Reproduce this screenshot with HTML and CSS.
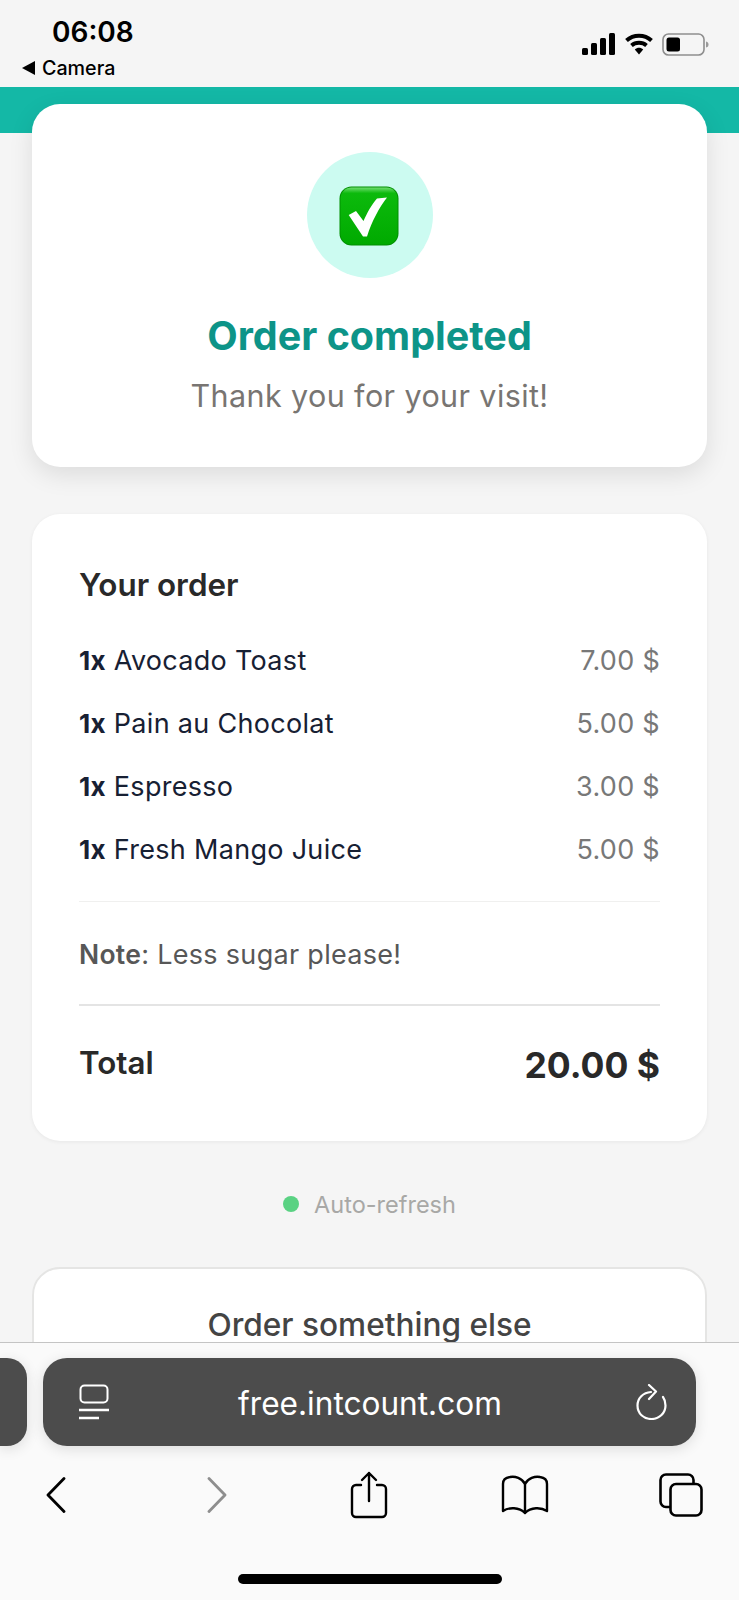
FILE: index.html
```html
<!DOCTYPE html>
<html lang="en">
<head>
<meta charset="utf-8">
<title>Order completed</title>
<link rel="stylesheet" href="styles.css">
</head>
<body>
<div class="screen">
  <header class="status">
    <div class="status-left">
      <div class="time">06:08</div>
      <div class="backapp"><span class="tri"></span><span>Camera</span></div>
    </div>
    <div class="status-icons">
      <svg class="sig" width="34" height="22" viewBox="0 0 34 22"><rect x="0" y="15" width="6" height="7" rx="1.5"/><rect x="9" y="10" width="6" height="12" rx="1.5"/><rect x="18" y="5" width="6" height="17" rx="1.5"/><rect x="27" y="0" width="6" height="22" rx="1.5"/></svg>
      <svg class="wifi" width="28" height="22" viewBox="0 0 28 22"><path d="M1.500 7.500C8.500 1 19.500 1 26.500 7.500" fill="none" stroke="#000" stroke-width="4"/><path d="M6.500 12.500C10.500 8.800 17.500 8.800 21.500 12.500" fill="none" stroke="#000" stroke-width="3.800"/><path d="M9.800 16.500C12.300 14.300 15.700 14.300 18.200 16.500L14 21.500Z"/></svg>
      <svg class="batt" width="47" height="23" viewBox="0 0 47 23"><rect x="1" y="1" width="41" height="21" rx="5.500" fill="none" stroke="#8e8e8e" stroke-width="1.600"/><rect x="4.500" y="4.500" width="13.500" height="14" rx="2.500"/><path d="M44 8.500C46 9 46.500 10 46.500 11.500C46.500 13 46 14 44 14.500Z" fill="#9a9a9a"/></svg>
    </div>
  </header>
  <div class="band"></div>
  <main class="content">
    <section class="card hero">
      <div class="badge">
        <svg class="check" width="60" height="60" viewBox="0 0 60 60">
          <defs>
            <linearGradient id="g" x1="0" y1="0" x2="0" y2="1"><stop offset="0" stop-color="#6fdc6f"/><stop offset=".1" stop-color="#0cba0c"/><stop offset="1" stop-color="#00aa00"/></linearGradient>
          </defs>
          <rect x="0.500" y="0.500" width="59" height="59" rx="12" fill="#018f01"/>
          <rect x="1.500" y="1.500" width="57" height="57" rx="11" fill="url(#g)"/>
          <path d="M9.700 29L17 25L24.500 35C28 27 33 18 38 12.500L48 11.500C40 22 33 35 28 50.500H24Z" fill="#fff"/>
        </svg>
      </div>
      <h1 class="hero-title">Order completed</h1>
      <p class="hero-sub">Thank you for your visit!</p>
    </section>
    <section class="card order">
      <h2 class="order-title">Your order</h2>
      <ul class="items">
        <li class="item"><span><b>1x</b> Avocado Toast</span><span class="price">7.00 $</span></li>
        <li class="item"><span><b>1x</b> Pain au Chocolat</span><span class="price">5.00 $</span></li>
        <li class="item"><span><b>1x</b> Espresso</span><span class="price">3.00 $</span></li>
        <li class="item"><span><b>1x</b> Fresh Mango Juice</span><span class="price">5.00 $</span></li>
      </ul>
      <div class="note"><p class="note-text"><b>Note</b>: Less sugar please!</p></div>
      <div class="total"><span class="total-label">Total</span><span class="total-value">20.00 $</span></div>
    </section>
    <div class="refresh"><span class="dot"></span><span>Auto-refresh</span></div>
    <section class="card more">
      <h2 class="more-title">Order something else</h2>
    </section>
  </main>
  <footer class="browser">
    <div class="url-row">
      <div class="pill-prev"></div>
      <div class="pill">
        <svg class="ic-list" width="30" height="36" viewBox="0 0 30 36" fill="none" stroke="#fff"><rect x="1.500" y="1.500" width="27" height="17" rx="4" stroke-width="2"/><path d="M0 26H30M0 34H20" stroke-width="2.600"/></svg>
        <span class="url">free.intcount.com</span>
        <svg class="ic-reload" width="32" height="36" viewBox="0 0 32 36" fill="none" stroke="#fff" stroke-width="2.200" stroke-linecap="round" stroke-linejoin="round"><path d="M15 8C7 8.500 1.500 14.500 1.500 21.500C1.500 29.500 7.500 35 15.500 35C23.500 35 29.500 29 29.500 21.500C29.500 18 28.500 15 27 13"/><path d="M13 1L20 7.500L13 15"/></svg>
      </div>
    </div>
    <nav class="tools">
      <svg class="t-back" width="20" height="36" viewBox="0 0 20 36" fill="none" stroke="#000" stroke-width="2.800" stroke-linecap="round" stroke-linejoin="round"><path d="M18 1.500L2 18L18 34.500"/></svg>
      <svg class="t-fwd" width="20" height="36" viewBox="0 0 20 36" fill="none" stroke="#8e8e8e" stroke-width="2.800" stroke-linecap="round" stroke-linejoin="round"><path d="M2 1.500L18 18L2 34.500"/></svg>
      <svg class="t-share" width="38" height="48" viewBox="0 0 38 48" fill="none" stroke="#000" stroke-width="2.400" stroke-linecap="round" stroke-linejoin="round"><path d="M11 14H6A4 4 0 0 0 2 18V42A4 4 0 0 0 6 46H32A4 4 0 0 0 36 42V18A4 4 0 0 0 32 14H27"/><path d="M19 30V2M12 9L19 2L26 9"/></svg>
      <svg class="t-book" width="48" height="40" viewBox="0 0 48 40" fill="none" stroke="#000" stroke-width="2.400" stroke-linecap="round" stroke-linejoin="round"><path d="M24 9C21 3 14 1 9 2C5 2.500 2 5 2 9V36C8 32 18 32 24 38C30 32 40 32 46 36V9C46 5 43 2.500 39 2C34 1 27 3 24 9Z"/><path d="M24 9V38"/></svg>
      <svg class="t-tabs" width="44" height="44" viewBox="0 0 44 44" fill="none" stroke="#000" stroke-width="2.600" stroke-linejoin="round"><path d="M11 34H7A5.500 5.500 0 0 1 1.500 28.500V7A5.500 5.500 0 0 1 7 1.500H29A5.500 5.500 0 0 1 34.500 7V11"/><rect x="11.500" y="11" width="31" height="31.500" rx="5.500"/></svg>
    </nav>
    <div class="home"></div>
  </footer>
</div>
</body>
</html>
```

FILE: styles.css
```css
* { box-sizing: border-box; }
html, body { margin: 0; padding: 0; }
body { font-family: Inter, "Liberation Sans", sans-serif; background: #f5f5f5; color: #262626; }
.screen { position: relative; width: 739px; height: 1600px; overflow: hidden; background: #f5f5f5; }

.status { height: 87px; display: flex; justify-content: space-between; padding: 15px 30px 0 22px; }
.time { font-size: 28px; font-weight: 600; line-height: 34px; margin-left: 30px; color: #000; }
.backapp { display: flex; align-items: center; gap: 7px; font-size: 19.700px; font-weight: 500; line-height: 24px; margin-top: 7px; color: #000; }
.tri { width: 0; height: 0; border-style: solid; border-width: 7px 13px 7px 0; border-color: transparent #000 transparent transparent; }
.status-icons { display: flex; align-items: center; gap: 9px; height: 22px; margin-top: 18px; }
.sig, .wifi { fill: #000; }

.band { height: 46px; background: #14b8a6; }
.content { margin-top: -29px; padding: 0 32px; position: relative; }
.card { background: #fff; border-radius: 28px; }

.hero { height: 363px; padding-top: 48px; display: flex; flex-direction: column; align-items: center; box-shadow: 0 8px 24px rgba(0,0,0,.1); }
.badge { width: 126px; height: 126px; border-radius: 50%; background: #ccfbf1; display: flex; align-items: center; justify-content: center; }
.check { margin: 2px 2px 0 0; }
.hero-title { margin: 36px 0 0; font-size: 39.500px; line-height: 44px; font-weight: 700; color: #0d9488; }
.hero-sub { margin: 18px 0 0; font-size: 30.500px; line-height: 40px; color: #787572; letter-spacing: .4px; }

.order { margin-top: 47px; height: 627px; padding: 48px 47px; box-shadow: 0 1px 4px rgba(0,0,0,.06); }
.order-title { margin: 0; font-size: 31.400px; line-height: 46px; font-weight: 600; color: #292929; }
.items { list-style: none; margin: 21px 0 0; padding: 0 0 20px; border-bottom: 1px solid #f0f0ef; }
.item { display: flex; justify-content: space-between; height: 63px; align-items: center; font-size: 27px; color: #172033; letter-spacing: .3px; }
.item b { font-weight: 700; font-size: 26px; }
.price { color: #787878; }
.note { height: 104px; padding-top: 2px; display: flex; align-items: center; border-bottom: 2px solid #e4e4e4; }
.note-text { margin: 0; font-size: 27px; color: #575757; letter-spacing: .3px; }
.note-text b { font-weight: 600; font-size: 26.500px; }
.total { display: flex; justify-content: space-between; align-items: center; height: 116px; }
.total-label { font-size: 31.300px; font-weight: 600; color: #292929; margin-bottom: 2px; }
.total-value { font-size: 35.500px; font-weight: 700; color: #292929; margin-top: 2px; }

.refresh { margin-top: 43px; height: 40px; display: flex; align-items: center; justify-content: center; gap: 15px; font-size: 23.500px; color: #a8a8a6; }
.dot { width: 16px; height: 16px; border-radius: 50%; background: #5ad283; }
.more { margin-top: 43px; height: 300px; border: 2px solid #e5e5e4; padding-top: 36px; text-align: center; }
.more-title { margin: 0; font-size: 31.600px; line-height: 40px; font-weight: 500; color: #444444; }

.browser { position: absolute; left: 0; right: 0; top: 1342px; bottom: 0; background: #fafafa; border-top: 1px solid #c4c4c4; }
.url-row { display: flex; gap: 16px; margin-top: 15px; height: 88px; }
.pill-prev { width: 27px; background: #4c4c4c; border-radius: 0 20px 20px 0; box-shadow: 0 3px 14px rgba(0,0,0,.12); }
.pill { width: 653px; background: #4c4c4c; border-radius: 24px; display: flex; align-items: center; justify-content: space-between; padding: 0 28px 0 36px; box-shadow: 0 3px 14px rgba(0,0,0,.12); }
.url { font-size: 31.600px; line-height: 40px; margin: 3px 5px 0 0; color: #fff; }
.tools { display: flex; align-items: center; padding: 0 0 0 46px; margin-top: 24px; height: 50px; }
.t-fwd { margin-left: 141px; }
.t-share { margin-left: 123px; }
.t-book { margin-left: 113px; }
.t-tabs { margin-left: 110px; }
.home { position: absolute; left: 238px; top: 231px; width: 264px; height: 10px; border-radius: 5px; background: #000; }
```
